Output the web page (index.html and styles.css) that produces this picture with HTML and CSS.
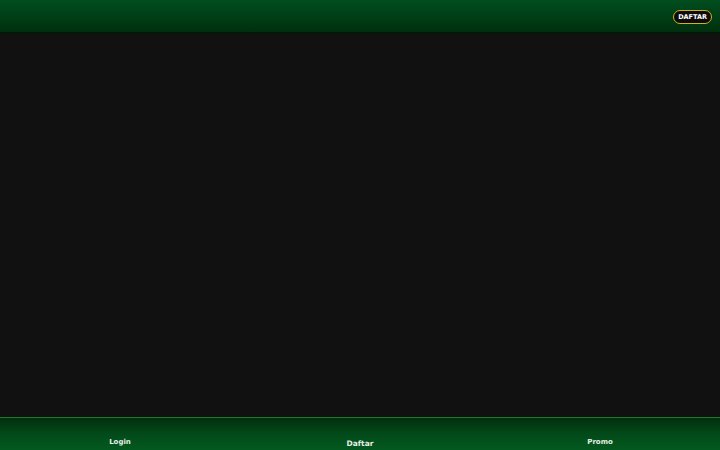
FILE: index.html
```html
<!DOCTYPE html>
<html>
<head>
<meta charset="utf-8">
<link rel="stylesheet" href="styles.css">
</head>
<body>
<div class="page">
  <header class="topbar">
    <a class="btn-daftar">DAFTAR</a>
  </header>
  <main class="content"></main>
  <nav class="bottombar">
    <a class="nav-item">Login</a>
    <a class="nav-item nav-main">Daftar</a>
    <a class="nav-item">Promo</a>
  </nav>
</div>
</body>
</html>
```
FILE: styles.css
```css
html, body {
  margin: 0;
  padding: 0;
  background: #111111;
  font-family: "DejaVu Sans", sans-serif;
}
.page {
  display: flex;
  flex-direction: column;
  height: 450px;
  width: 720px;
}
.topbar {
  height: 32px;
  flex: none;
  background: linear-gradient(to bottom, #014d1e 0%, #013c15 60%, #002f0e 100%);
  border-bottom: 2px solid #06150a;
  display: flex;
  align-items: center;
  justify-content: flex-end;
  padding-right: 8px;
}
.btn-daftar {
  display: inline-flex;
  align-items: center;
  justify-content: center;
  height: 12px;
  padding: 0 4px;
  background: #0c0c0c;
  border: 1.5px solid #d4b21f;
  border-radius: 9px;
  color: #ffffff;
  font-size: 6.5px;
  font-weight: bold;
  margin-top: 1px;
}
.content {
  flex: 1;
  background: #111111;
}
.bottombar {
  flex: none;
  border-top: 1px solid #1f7a2c;
  background: linear-gradient(to bottom, #012f0e 0%, #024a19 50%, #03591f 100%);
  display: grid;
  grid-template-columns: 1fr 1fr 1fr;
  align-items: end;
  padding-bottom: 3px;
  box-sizing: content-box;
  height: 29px;
}
.nav-item {
  text-align: center;
  color: #e6efe6;
  font-size: 7px;
  font-weight: bold;
  line-height: 9px;
}
.nav-main {
  font-size: 7.5px;
  line-height: 9px;
  margin-bottom: -1px;
}
```
